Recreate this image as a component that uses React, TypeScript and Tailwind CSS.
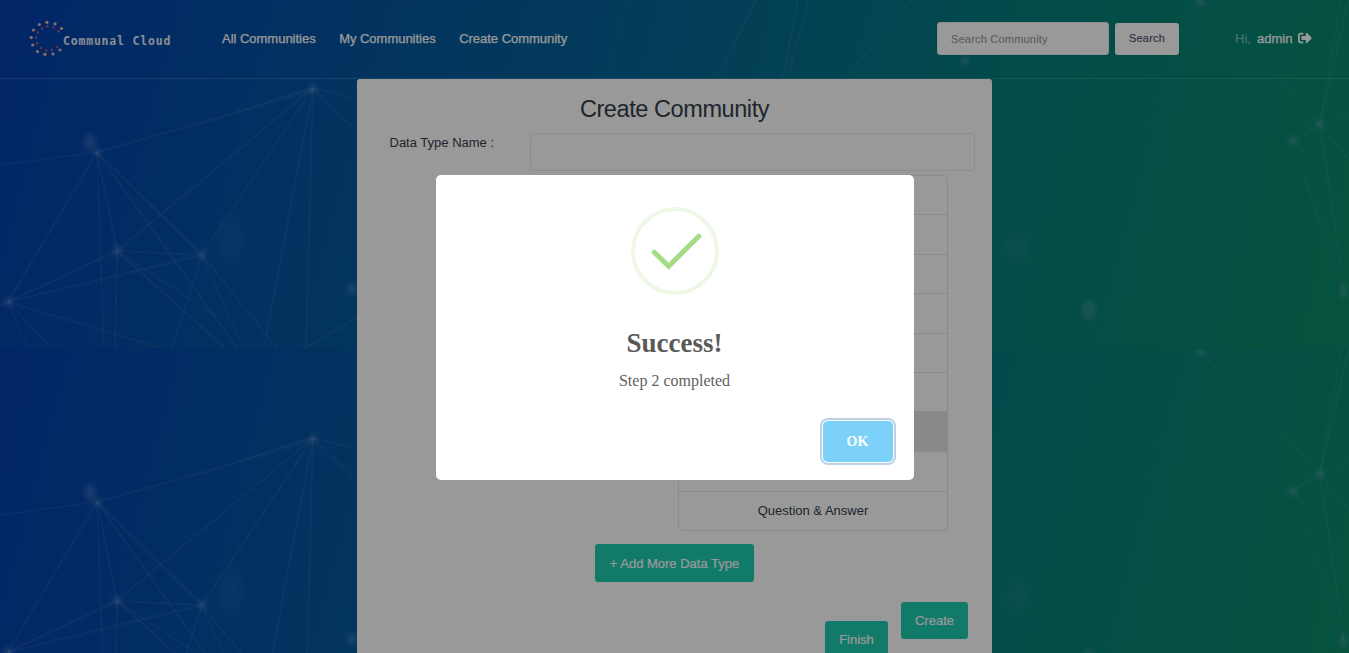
import { FaSignOutAlt } from "react-icons/fa";

const lines: number[][] = [
  [313, 89, 215, 120, 1.4], [215, 120, 97, 153, 1.4], [97, 153, 0, 166, 1.2],
  [313, 89, 117, 252, 1.3], [313, 89, 202, 256, 1.3], [313, 89, 264, 349, 1.3], [313, 89, 306, 349, 1.2],
  [313, 89, 380, 155, 1.3], [313, 89, 380, 106, 1], [97, 153, 8, 303, 1.4], [97, 153, 117, 252, 1.5],
  [97, 153, 202, 256, 1.5], [97, 153, 104, 349, 1], [97, 153, 237, 349, 1.4], [117, 252, 8, 303, 1.5],
  [117, 252, 202, 256, 1], [117, 252, 115, 349, 1.5], [117, 252, 225, 349, 1.4], [117, 252, 217, 318, 1.1],
  [202, 256, 8, 303, 1.5], [202, 256, 172, 349, 1.2], [202, 256, 243, 349, 1], [202, 256, 277, 349, 1.3],
  [8, 303, 162, 349, 1.3], [8, 303, 52, 349, 1.2], [8, 303, 28, 349, 1], [8, 303, 0, 307, 1.4],
  [305, 349, 400, 294, 1.3], [1320, 125, 1349, 0, 1.2], [1320, 125, 1341, 0, 1], [1320, 125, 1260, 60, 1],
  [1320, 125, 1293, 142, 1.2], [1320, 125, 1349, 161, 1.2], [1320, 125, 1328, 180, 1.2], [1328, 180, 1344, 292, 1.2],
  [1320, 125, 1349, 114, 1], [1320, 125, 1150, 97, 0.8], [1320, 125, 1130, 124, 0.6], [1344, 292, 1304, 176, 1],
  [1200, 3, 1340, 50, 0.8], [1200, 3, 1240, 45, 1], [1293, 142, 1330, 185, 0.8],
  [757, 0, 718, 78, 1.2], [798, 0, 783, 78, 1.4], [809, 0, 788, 78, 1.2], [913, 0, 846, 78, 1.3],
];
const dots: number[][] = [
  [313, 90, 4, 5], [97, 153, 4, 4], [90, 143, 6, 8], [117, 252, 5, 5], [202, 256, 4, 5], [8, 303, 5, 5],
  [1320, 125, 4, 5], [1293, 142, 5, 5], [1344, 292, 4, 7], [1089, 311, 7, 10], [965, 62, 4, 5], [1200, 2, 5, 5], [352, 290, 5, 6],
];

function Backdrop() {
  return (
    <svg width="1349" height="699" className="block">
      <defs>
        <linearGradient id="base" gradientUnits="userSpaceOnUse" x1="0" y1="0" x2="1330" y2="350">
          <stop offset="0" stopColor="#043eae" />
          <stop offset="0.26" stopColor="#04569f" />
          <stop offset="0.45" stopColor="#056498" />
          <stop offset="0.72" stopColor="#067c7c" />
          <stop offset="1" stopColor="#098a68" />
        </linearGradient>
        <filter id="soft" x="-50%" y="-50%" width="200%" height="200%"><feGaussianBlur stdDeviation="2.2" /></filter>
        <filter id="haze" x="-50%" y="-50%" width="200%" height="200%"><feGaussianBlur stdDeviation="6" /></filter>
        <clipPath id="frame"><rect width="1349" height="350" /></clipPath>
        <g id="tile" clipPath="url(#frame)">
          <rect width="1349" height="350" fill="url(#base)" />
          <g stroke="#8fa6e0" strokeOpacity="0.12">
            {lines.map(([a, b, c, d, w], i) => <line key={i} x1={a} y1={b} x2={c} y2={d} strokeWidth={w * 1.3} />)}
          </g>
          <path d="M313 86L205 124L313 94Z" fill="#93b0e0" fillOpacity="0.06" />
          <g fill="#93b0e0" fillOpacity="0.25" filter="url(#soft)">
            {dots.map(([x, y, rx, ry], i) => <ellipse key={i} cx={x} cy={y} rx={rx} ry={ry} />)}
          </g>
          <g fill="#8fbbe0" fillOpacity="0.09" filter="url(#haze)">
            <ellipse cx="231" cy="242" rx="11" ry="24" />
            <ellipse cx="1018" cy="248" rx="12" ry="16" />
          </g>
        </g>
      </defs>
      <use href="#tile" y="349" />
      <use href="#tile" y="-1" />
    </svg>
  );
}

function Logo() {
  const big = [[47, 22.3], [39.3, 24.5], [33.5, 30], [31.2, 37.5], [32.7, 45], [37.5, 51.5], [45, 54.3], [53, 54], [60, 50], [61.5, 28.5], [55, 23.8]];
  const small = [[47.3, 26.2], [42, 28.5], [38, 32.5], [36, 37.7], [37, 43.3], [41, 48], [46.2, 50.5], [52, 50], [57.3, 47], [58.5, 31.3], [53.5, 27.5]];
  return (
    <svg viewBox="28 18 36 40" className="h-10 w-9 shrink-0">
      {big.map(([x, y], i) => <circle key={i} cx={x} cy={y} r="1.6" fill="#e8bba8" />)}
      {small.map(([x, y], i) => <circle key={i} cx={x} cy={y} r="1.2" fill="#b9587c" />)}
    </svg>
  );
}

function Header() {
  return (
    <header className="flex h-[79px] items-start border-b border-white/15 text-[13px] text-white">
      <div className="flex w-[222px] shrink-0 pt-[18px] pl-7">
        <Logo />
        <span className="-ml-px pt-[13px] font-['DejaVu_Sans_Mono',monospace] text-[11.5px] leading-5 font-bold tracking-[0.8px] whitespace-pre text-white/90">Communal Cloud</span>
      </div>
      <nav className="flex w-[715px] shrink-0 gap-[23.5px] pt-[29px] leading-5 tracking-[-0.02px] [-webkit-text-stroke:0.25px_white]">
        <a>All Communities</a>
        <a>My Communities</a>
        <a>Create Community</a>
      </nav>
      <div className="flex w-[298px] shrink-0 items-end gap-1.5 pt-[22px] text-[11px]">
        <div className="h-[33px] w-[172px] rounded-[3px] border border-[#eee] bg-white px-[13px] leading-[32px] tracking-[0.2px] text-[#a0a0ac] [-webkit-text-stroke:0.2px_#a0a0ac]">Search Community</div>
        <button className="h-8 w-16 rounded-[3px] bg-white pb-0.5 tracking-[0.2px] text-[#5a5a72] [-webkit-text-stroke:0.2px_#5a5a72]">Search</button>
      </div>
      <div className="flex items-center pt-[29px] leading-5">
        <span className="w-[22px] text-white/50">Hi,</span>
        <span className="mr-1.5 [-webkit-text-stroke:0.25px_white]">admin</span>
        <FaSignOutAlt size={14} className="-mt-0.5" />
      </div>
    </header>
  );
}

function Card() {
  return (
    <main className="mx-auto h-[574px] w-[635px] rounded-t-[3px] bg-white font-['Liberation_Sans',Arial,sans-serif] text-[13px] text-[#34404a]">
      <h1 className="pt-[15px] text-center text-[23.5px] leading-[30px] tracking-[-0.42px]">Create Community</h1>
      <div className="mt-[9px] flex pr-[17px] pl-8">
        <label className="w-[141px] pl-[0.5px] leading-5">Data Type Name :</label>
        <div className="h-[38px] flex-1 rounded border border-[#e9e9e9]" />
      </div>
      <ul className="mt-1 ml-[321px] grid h-[356px] w-[270px] grid-rows-[39px_40px_39px_40px_39px_39px_40px_40px_38px] divide-y divide-[#e7e7e7] rounded border border-[#e7e7e7] text-center">
        {Array.from({ length: 9 }, (_, i) => (
          <li key={i} className={i === 6 ? "bg-[#e4e4e4]" : "pt-[9px] leading-5"}>{i === 8 ? "Question & Answer" : ""}</li>
        ))}
      </ul>
      <div className="mt-[13px] flex justify-center text-white [-webkit-text-stroke:0.2px_white]">
        <button className="h-[38px] w-[159px] rounded-[3px] bg-[#1dcbb0] pt-px">+ Add More Data Type</button>
      </div>
      <div className="mt-5 flex justify-end gap-[13px] pr-6 text-white [-webkit-text-stroke:0.2px_white]">
        <button className="mt-[19px] h-[37px] w-[63px] rounded-[3px] bg-[#1dcbb0]">Finish</button>
        <button className="h-[37px] w-[67px] rounded-[3px] bg-[#1dcbb0]">Create</button>
      </div>
    </main>
  );
}

function SuccessDialog() {
  return (
    <div role="dialog" className="mt-[175px] flex h-[305px] w-[478px] flex-col items-center rounded-[5px] bg-white font-['Liberation_Serif',serif]">
      <svg viewBox="0 0 88 88" className="mt-8 size-[88px] shrink-0">
        <circle cx="44" cy="44" r="42" fill="none" stroke="#edf8e7" strokeWidth="4" />
        <path d="M23.3 45.2L37.7 59.2L67.8 29.2" fill="none" stroke="#a5dc86" strokeWidth="5" strokeLinecap="round" />
      </svg>
      <h2 className="mt-8 text-[27px] leading-8 font-bold text-[#595959]">Success!</h2>
      <p className="mt-3 text-base leading-5 text-[#616161]">Step 2 completed</p>
      <button className="mt-[30px] mr-[21px] h-[41px] w-[70px] self-end rounded-[5px] bg-[#7cd1f9] text-sm font-bold text-white shadow-[0_0_0_1px_#fff,0_0_0_3px_#bdd2e6]">OK</button>
    </div>
  );
}

export default function App() {
  return (
    <div className="relative h-[653px] w-[1349px] overflow-hidden font-['Liberation_Sans',Arial,sans-serif]">
      <div className="absolute inset-0"><Backdrop /></div>
      <div className="relative">
        <Header />
        <Card />
      </div>
      <div className="absolute inset-0 flex items-start justify-center bg-black/40">
        <SuccessDialog />
      </div>
    </div>
  );
}
